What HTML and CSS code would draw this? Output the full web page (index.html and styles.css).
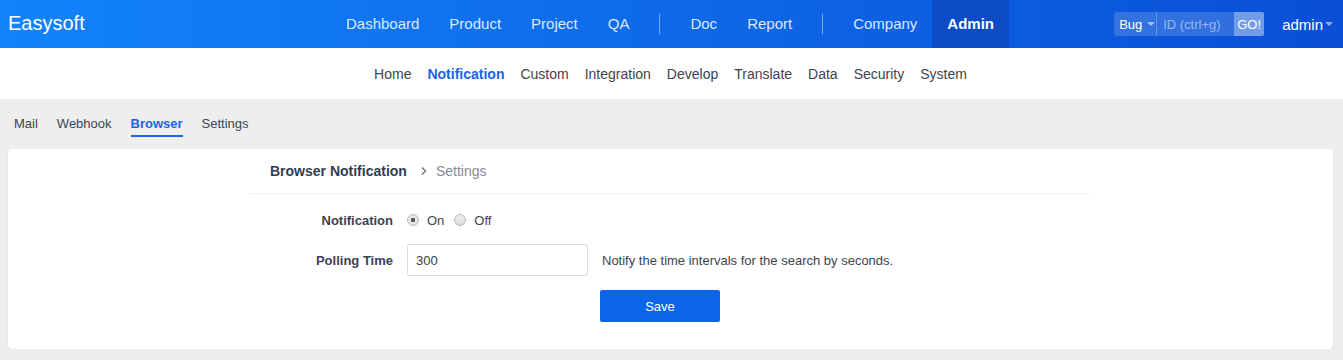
FILE: index.html
```html
<!DOCTYPE html>
<html lang="en">
<head>
    <meta charset="UTF-8">
    <meta name="viewport" content="width=device-width, initial-scale=1.0">
    <title>Browser Notification - Admin</title>
    <link rel="stylesheet" href="styles.css">
</head>
<body>
    <header class="topbar">
        <a class="brand" href="#">Easysoft</a>
        <nav class="main-nav">
            <a href="#">Dashboard</a>
            <a href="#">Product</a>
            <a href="#">Project</a>
            <a href="#">QA</a>
            <span class="divider"></span>
            <a href="#">Doc</a>
            <a href="#">Report</a>
            <span class="divider"></span>
            <a href="#">Company</a>
            <a href="#" class="active">Admin</a>
        </nav>
        <div class="top-right">
            <div class="search">
                <span class="search-type">Bug <i class="caret"></i></span>
                <input class="search-input" type="text" placeholder="ID (ctrl+g)">
                <button class="search-go">GO!</button>
            </div>
            <a class="user" href="#">admin<i class="caret"></i></a>
        </div>
    </header>

    <nav class="sub-nav">
        <a href="#">Home</a>
        <a href="#" class="active">Notification</a>
        <a href="#">Custom</a>
        <a href="#">Integration</a>
        <a href="#">Develop</a>
        <a href="#">Translate</a>
        <a href="#">Data</a>
        <a href="#">Security</a>
        <a href="#">System</a>
    </nav>

    <div class="tabs">
        <a href="#">Mail</a>
        <a href="#">Webhook</a>
        <a href="#" class="active">Browser</a>
        <a href="#">Settings</a>
    </div>

    <main class="card">
        <div class="card-inner">
            <div class="crumbs">
                <strong>Browser Notification</strong>
                <span class="chevron">
                    <svg width="8" height="10" viewBox="0 0 8 10"><path d="M2 1.5 L5.5 5 L2 8.5" fill="none" stroke="#777" stroke-width="1.5"/></svg>
                </span>
                <span class="crumb-sub">Settings</span>
            </div>
            <form class="form">
                <div class="row">
                    <label class="label">Notification</label>
                    <div class="field radios">
                        <label class="radio"><input type="radio" name="turnon" checked> On</label>
                        <label class="radio"><input type="radio" name="turnon"> Off</label>
                    </div>
                </div>
                <div class="row">
                    <label class="label">Polling Time</label>
                    <div class="field">
                        <input class="text-input" type="text" value="300">
                        <span class="help">Notify the time intervals for the search by seconds.</span>
                    </div>
                </div>
                <div class="actions">
                    <button type="button" class="btn-save">Save</button>
                </div>
            </form>
        </div>
    </main>
</body>
</html>
```

FILE: styles.css
```css
* {
    box-sizing: border-box;
}

body {
    margin: 0;
    background: #eeeeee;
    font-family: "Liberation Sans", Arial, sans-serif;
    font-size: 13px;
    color: #3c4353;
}

a {
    text-decoration: none;
    color: inherit;
}

/* Top blue bar */
.topbar {
    display: grid;
    grid-template-columns: 1fr auto 1fr;
    align-items: center;
    height: 48px;
    padding-right: 3px;
    background: linear-gradient(to right, #1183fb, #0a4fd6);
    color: #fff;
}

.brand {
    padding-left: 8px;
    padding-bottom: 2px;
    font-size: 20px;
    color: #fff;
}

.main-nav {
    display: flex;
    align-items: center;
    height: 48px;
}

.main-nav a {
    display: flex;
    align-items: center;
    height: 48px;
    padding: 0 15px 2px;
    font-size: 15px;
    color: #dde9ff;
}

.main-nav a.active {
    background: #0b4bc6;
    color: #fff;
    font-weight: bold;
}

.main-nav .divider {
    width: 1px;
    height: 20px;
    margin: 0 15px;
    background: rgba(255, 255, 255, 0.45);
}

.top-right {
    display: flex;
    align-items: center;
    justify-content: flex-end;
    padding-right: 7px;
}

.search {
    display: flex;
    height: 24px;
    border-radius: 2px;
    background: rgba(255, 255, 255, 0.16);
    overflow: hidden;
}

.search-type {
    display: flex;
    align-items: center;
    width: 43px;
    padding-left: 5px;
    border-right: 1px solid rgba(255, 255, 255, 0.25);
    font-size: 13px;
    color: #fff;
}

.caret {
    display: inline-block;
    width: 0;
    height: 0;
    margin-left: 5px;
    border-left: 4px solid transparent;
    border-right: 4px solid transparent;
    border-top: 4px solid rgba(255, 255, 255, 0.55);
}

.search-input {
    width: 77px;
    padding: 0 6px;
    border: 0;
    background: transparent;
    font-family: inherit;
    font-size: 13px;
    color: #fff;
    outline: none;
}

.search-input::placeholder {
    color: rgba(255, 255, 255, 0.5);
}

.search-go {
    width: 30px;
    padding: 0;
    border: 0;
    background: rgba(255, 255, 255, 0.32);
    font-family: inherit;
    font-size: 13px;
    color: #fff;
}

.user {
    display: flex;
    align-items: center;
    margin-left: 18px;
    font-size: 15px;
    color: #fff;
}

.user .caret {
    margin-left: 2px;
}

/* Second level menu */
.sub-nav {
    display: flex;
    justify-content: center;
    align-items: center;
    height: 51px;
    padding-right: 2px;
    background: #fff;
}

.sub-nav a {
    padding: 0 8px;
    font-size: 14px;
    color: #3c4353;
}

.sub-nav a.active {
    color: #1a63eb;
    font-weight: bold;
}

/* Third level tabs */
.tabs {
    display: flex;
    gap: 19px;
    height: 50px;
    padding: 17px 0 0 14px;
}

.tabs a {
    height: 21px;
    font-size: 13px;
    color: #3c4353;
}

.tabs a.active {
    color: #1a63eb;
    font-weight: bold;
    border-bottom: 2px solid #1a63eb;
}

/* Content card */
.card {
    margin: 0 10px 0 8px;
    height: 200px;
    padding-right: 2px;
    background: #fff;
    border-radius: 4px;
    box-shadow: 0 1px 2px rgba(0, 0, 0, 0.1);
}

.card-inner {
    width: 841px;
    margin: 0 auto;
}

.crumbs {
    display: flex;
    align-items: center;
    height: 45px;
    padding-left: 21px;
    border-bottom: 1px solid #eeeeee;
    font-size: 14px;
}

.crumbs strong {
    color: #313c52;
}

.chevron {
    display: flex;
    margin: 0 8px 0 13px;
}

.crumb-sub {
    color: #838a9d;
}

.form {
    padding-top: 10px;
}

.row {
    display: flex;
    align-items: center;
    height: 32px;
    margin-bottom: 8px;
}

.label {
    width: 144px;
    text-align: right;
    font-weight: bold;
    color: #3c4353;
}

.field {
    display: flex;
    align-items: center;
    margin-left: 14px;
}

.radios {
    gap: 10px;
}

.radio {
    display: flex;
    align-items: center;
    gap: 8px;
}

.radio input {
    appearance: none;
    width: 12px;
    height: 12px;
    margin: 0;
    border: 1px solid #b8b8b8;
    border-radius: 50%;
    background: linear-gradient(#f0f0f0, #dcdcdc);
}

.radio input:checked {
    background: radial-gradient(circle, #555 0, #555 2px, #e6e6e6 2.5px);
}

.text-input {
    width: 181px;
    height: 32px;
    padding: 0 8px;
    border: 1px solid #dcdcdc;
    border-radius: 2px;
    font-family: inherit;
    font-size: 13px;
    color: #313c52;
}

.help {
    margin-left: 14px;
    color: #3c4353;
}

.actions {
    padding: 6px 0 0 351px;
}

.btn-save {
    width: 120px;
    height: 32px;
    border: 0;
    border-radius: 2px;
    background: #0c64eb;
    font-family: inherit;
    font-size: 13px;
    color: #fff;
}
```
